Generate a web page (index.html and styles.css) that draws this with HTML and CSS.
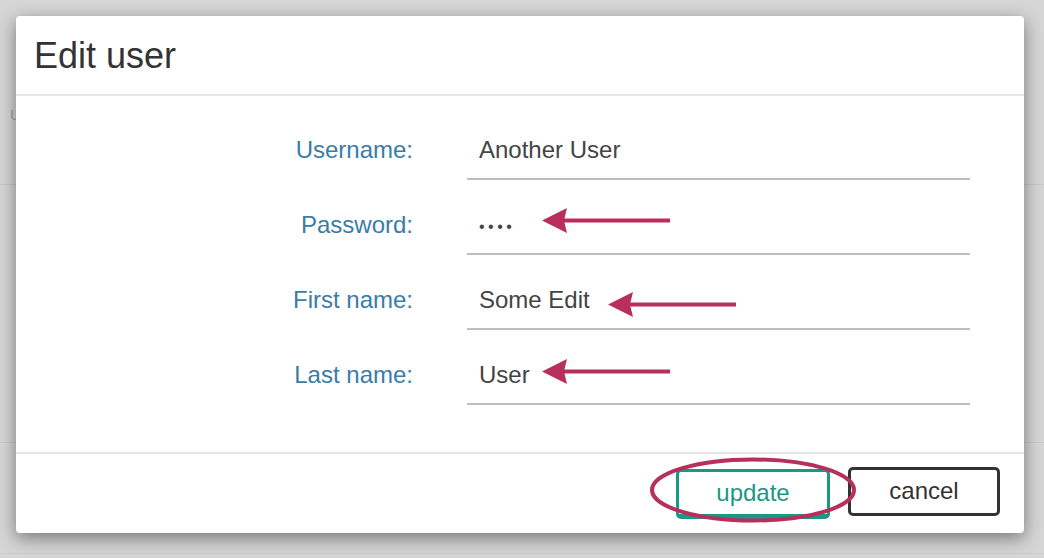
FILE: index.html
```html
<!DOCTYPE html>
<html lang="en">
<head>
    <meta charset="UTF-8">
    <meta name="viewport" content="width=device-width, initial-scale=1.0">
    <title>Edit user</title>
    <link rel="stylesheet" href="styles.css">
</head>
<body>

    <!-- Page behind the dialog -->
    <div class="page">
        <div class="page-head"><span class="col-title">Username</span></div>
        <div class="page-row tall"></div>
        <div class="page-row"></div>
    </div>

    <!-- Edit user dialog -->
    <div class="modal">
        <div class="modal-header">
            <h4 class="modal-title">Edit user</h4>
        </div>

        <div class="modal-body">
            <div class="form-row">
                <label class="field-label">Username:</label>
                <div class="field">Another User</div>
            </div>

            <div class="form-row">
                <label class="field-label">Password:</label>
                <div class="field">
                    <span class="dots">••••</span>
                    <svg class="arrow arrow-password" width="128" height="25" viewBox="0 0 128 25">
                        <line x1="20" y1="12.5" x2="128" y2="12.5" />
                        <polygon points="0,12.5 25,0 22,12.5 25,25" />
                    </svg>
                </div>
            </div>

            <div class="form-row">
                <label class="field-label">First name:</label>
                <div class="field">
                    Some Edit
                    <svg class="arrow arrow-first" width="128" height="25" viewBox="0 0 128 25">
                        <line x1="20" y1="12.5" x2="128" y2="12.5" />
                        <polygon points="0,12.5 25,0 22,12.5 25,25" />
                    </svg>
                </div>
            </div>

            <div class="form-row">
                <label class="field-label">Last name:</label>
                <div class="field">
                    User
                    <svg class="arrow arrow-last" width="128" height="25" viewBox="0 0 128 25">
                        <line x1="20" y1="12.5" x2="128" y2="12.5" />
                        <polygon points="0,12.5 25,0 22,12.5 25,25" />
                    </svg>
                </div>
            </div>
        </div>

        <div class="modal-footer">
            <button class="btn btn-update">update</button>
            <button class="btn btn-cancel">cancel</button>
            <!-- annotation circle round the update button -->
            <svg class="highlight" width="208" height="66" viewBox="0 0 208 66">
                <ellipse cx="104" cy="33" rx="101" ry="30.5" />
            </svg>
        </div>
    </div>

</body>
</html>
```

FILE: styles.css
```css
body {
    margin: 0;
    font-family: "Liberation Sans", Arial, sans-serif;
    background-color: #d6d6d6;
    color: #444;
    height: 558px;
    overflow: hidden;
    position: relative;
}

/* page behind the dialog */
.page {
    width: 100%;
}

.page-head {
    height: 185px;
    border-bottom: 1px solid #cacaca;
    box-sizing: border-box;
    padding: 106px 0 0 10px;
}

.col-title {
    font-size: 15px;
    color: #a2a2a2;
}

.page-row {
    height: 110px;
    border-bottom: 1px solid #cacaca;
}

.page-row.tall {
    height: 257px;
}

/* dialog */
.modal {
    position: absolute;
    top: 16px;
    left: 16px;
    width: 1008px;
    height: 517px;
    background-color: #fff;
    border-radius: 4px;
    box-shadow: 0 5px 18px rgba(0, 0, 0, 0.45);
    display: flex;
    flex-direction: column;
}

.modal-header {
    height: 76px;
    border-bottom: 2px solid #e5e5e5;
    padding: 2px 18px 0;
    display: flex;
    align-items: center;
}

.modal-title {
    margin: 0;
    font-size: 36px;
    font-weight: normal;
    line-height: 1.1;
    color: #333;
}

.modal-body {
    padding: 32px 0 47px;
    display: flex;
    flex-direction: column;
    gap: 23px;
    border-bottom: 2px solid #e5e5e5;
}

.form-row {
    display: grid;
    grid-template-columns: 397px 503px;
    column-gap: 54px;
    align-items: baseline;
    font-size: 24px;
}

.field-label {
    text-align: right;
    color: #3a7ca8;
}

.field {
    position: relative;
    line-height: 44px;
    padding: 0 0 6px 12px;
    border-bottom: 2px solid #bdbdbd;
    color: #444;
}

.dots {
    font-size: 16px;
    line-height: 0;
    letter-spacing: 3.5px;
    vertical-align: 1px;
}

/* red annotation arrows */
.arrow {
    position: absolute;
}

.arrow line {
    stroke: #b82e5c;
    stroke-width: 4;
}

.arrow polygon {
    fill: #b82e5c;
}

.arrow-password {
    left: 75px;
    top: 5px;
}

.arrow-first {
    left: 141px;
    top: 14px;
}

.arrow-last {
    left: 75px;
    top: 6px;
}

.modal-footer {
    position: relative;
    flex: 1;
    display: flex;
    justify-content: flex-end;
    align-items: flex-start;
    gap: 18px;
    padding: 13px 24px 0 0;
}

.btn {
    font-family: "Liberation Sans", Arial, sans-serif;
    font-size: 24px;
    background-color: #fff;
    border-radius: 5px;
    cursor: pointer;
    padding: 0 0 1px;
}

.btn-update {
    width: 154px;
    height: 50px;
    margin-top: 2px;
    color: #1a9886;
    border: 3px solid #1a9886;
    border-bottom-width: 5px;
}

.btn-cancel {
    width: 152px;
    height: 49px;
    color: #333;
    border: 3px solid #333;
}

.highlight {
    position: absolute;
    left: 633px;
    top: 3px;
}

.highlight ellipse {
    fill: none;
    stroke: #b82e5c;
    stroke-width: 4;
}
```
